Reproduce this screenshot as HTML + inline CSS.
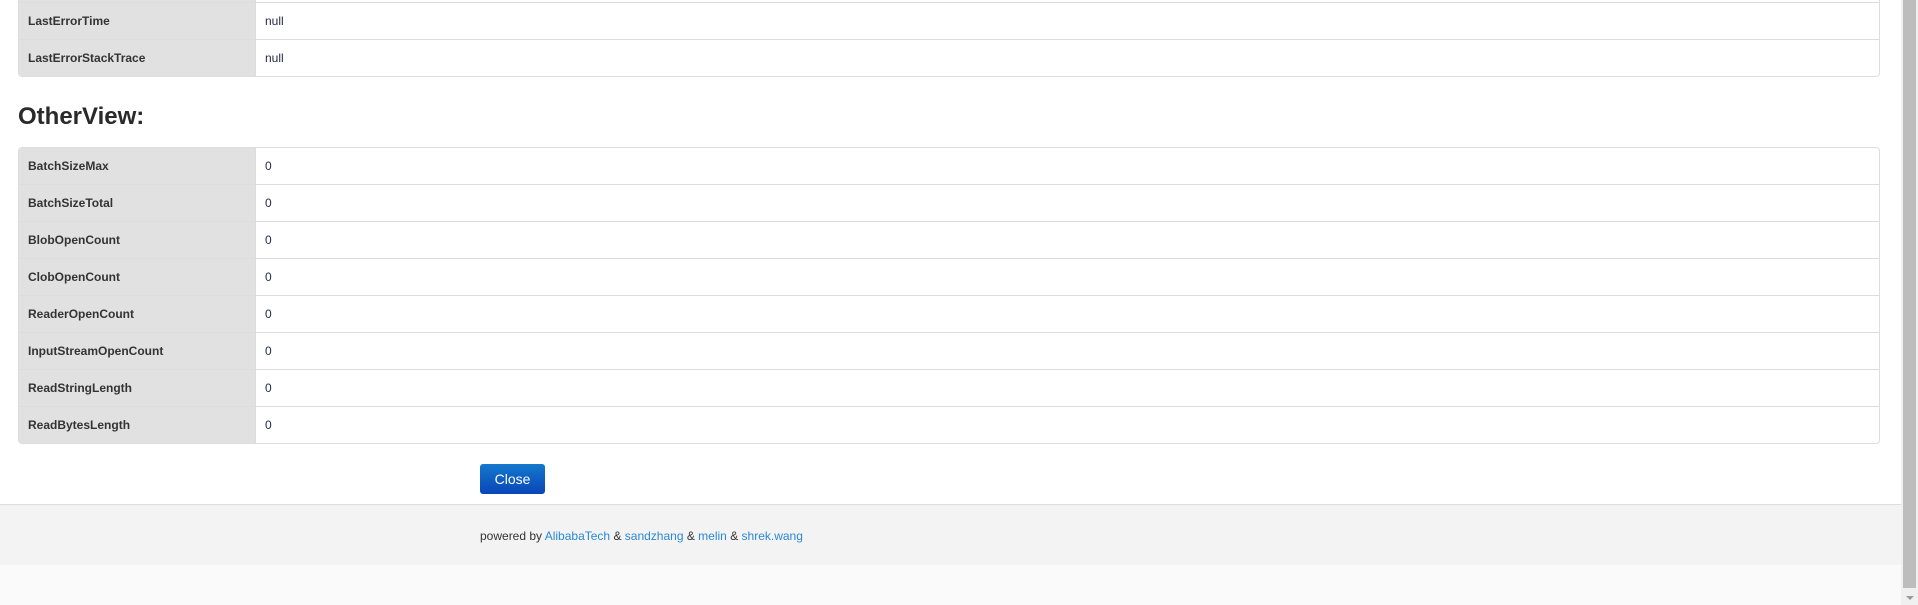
<!DOCTYPE html>
<html><head><meta charset="utf-8"><style>
html,body{margin:0;padding:0;}
body{width:1918px;height:605px;overflow:hidden;background:#fafafa;font-family:"Liberation Sans",Arial,sans-serif;color:#333;position:relative;}
.main{position:absolute;left:0;top:0;width:1901px;height:504px;background:#fff;}
table{position:absolute;left:18px;width:1862px;border-collapse:separate;border-spacing:0;border:1px solid #ddd;border-radius:4px;font-size:12px;}
td{height:36px;border-top:1px solid #ddd;padding:0 0 0 9px;vertical-align:middle;}
tr:first-child td{border-top:none;}
td.l{width:227px;background:#e1e1e1;font-weight:bold;border-right:1px solid #ddd;}
td.v{font-size:12px;color:#1f2a44;}
h2{position:absolute;left:18px;top:103px;margin:0;font-size:24px;font-weight:bold;color:#2a2a2a;}
.btn{position:absolute;left:480px;top:464px;width:65px;height:30px;border-radius:3px;background:linear-gradient(#1479cc,#0a45b8);color:#fff;font-size:14px;text-align:center;line-height:30px;}
.foot{position:absolute;left:0;top:504px;width:1901px;height:61px;background:#f3f3f3;border-top:1px solid #ddd;box-sizing:border-box;font-size:12px;}
.foot span{position:absolute;left:480px;top:24px;}
.foot a{color:#2a88d4;text-decoration:none;}
.sb{position:absolute;left:1901px;top:0;width:17px;height:605px;background:#f0f0f0;}
.th{position:absolute;left:2px;top:0;width:13px;height:588px;background:#bdbdbd;}
.ar{position:absolute;left:5px;top:596px;width:0;height:0;border-left:4px solid transparent;border-right:4px solid transparent;border-top:4px solid #999;}
</style></head><body>
<div class="main">
<table style="top:-35px">
<tr><td class="l">x</td><td class="v"></td></tr>
<tr><td class="l">LastErrorTime</td><td class="v">null</td></tr>
<tr><td class="l">LastErrorStackTrace</td><td class="v">null</td></tr>
</table>
<h2>OtherView:</h2>
<table style="top:147px">
<tr><td class="l">BatchSizeMax</td><td class="v">0</td></tr>
<tr><td class="l">BatchSizeTotal</td><td class="v">0</td></tr>
<tr><td class="l">BlobOpenCount</td><td class="v">0</td></tr>
<tr><td class="l">ClobOpenCount</td><td class="v">0</td></tr>
<tr><td class="l">ReaderOpenCount</td><td class="v">0</td></tr>
<tr><td class="l">InputStreamOpenCount</td><td class="v">0</td></tr>
<tr><td class="l">ReadStringLength</td><td class="v">0</td></tr>
<tr><td class="l">ReadBytesLength</td><td class="v">0</td></tr>
</table>
<div class="btn">Close</div>
</div>
<div class="foot"><span>powered by <a>AlibabaTech</a> &amp; <a>sandzhang</a> &amp; <a>melin</a> &amp; <a>shrek.wang</a></span></div>
<div class="sb"><div class="th"></div><div class="ar"></div></div>
</body></html>
